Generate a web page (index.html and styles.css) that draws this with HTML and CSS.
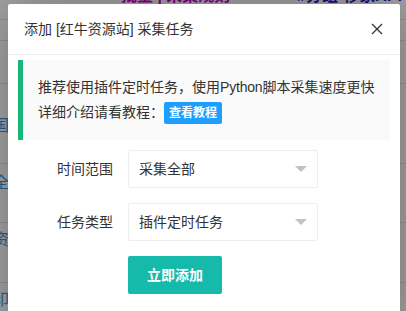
FILE: index.html
```html
<!DOCTYPE html>
<html lang="zh-CN">
<head>
<meta charset="utf-8">
<title>添加采集任务</title>
<link rel="stylesheet" href="styles.css">
</head>
<body>
<div class="page">
  <div class="row row-head">
    <span class="cell-first"></span>
    <span class="head-links">批量 | 采集规则</span>
    <span class="head-right">#分组·移家API</span>
  </div>
  <div class="row row-a"><span class="cell-first"></span></div>
  <div class="row row-b"><span class="cell-first"></span></div>
  <div class="row row-c"><span class="cell-first link">国</span></div>
  <div class="row row-d"><span class="cell-first link">全</span></div>
  <div class="row row-e"><span class="cell-first link">资</span></div>
  <div class="row row-f"><span class="cell-first link">印</span></div>
</div>

<div class="layer">
  <div class="layer-title">添加 [红牛资源站] 采集任务</div>
  <span class="layer-close" aria-label="关闭">
    <svg width="16" height="16" viewBox="0 0 16 16"><path d="M3 3 L13 13 M13 3 L3 13" stroke="#2f2f2f" stroke-width="1.2" fill="none"/></svg>
  </span>
  <div class="layer-content">
    <blockquote class="quote">
      <span class="quote-line">推荐使用插件定时任务，使用<span class="latin">Python</span>脚本采集速度更快</span>
      <span class="quote-line">详细介绍请看教程：<a class="btn-xs">查看教程</a></span>
    </blockquote>
    <form class="form">
      <div class="form-item">
        <label class="form-label">时间范围</label>
        <div class="input-inline">
          <div class="select">
            <span class="select-text">采集全部</span>
            <i class="edge"></i>
          </div>
        </div>
      </div>
      <div class="form-item">
        <label class="form-label">任务类型</label>
        <div class="input-inline">
          <div class="select">
            <span class="select-text">插件定时任务</span>
            <i class="edge"></i>
          </div>
        </div>
      </div>
      <div class="form-item">
        <div class="input-block">
          <button type="button" class="btn">立即添加</button>
        </div>
      </div>
    </form>
  </div>
</div>
</body>
</html>
```
FILE: styles.css
```css
* { box-sizing: border-box; }
html, body {
  margin: 0;
  padding: 0;
  width: 406px;
  height: 311px;
  overflow: hidden;
}
body {
  background: #a3a3a3;
  font-family: "Liberation Sans", "Noto Sans CJK SC", sans-serif;
  font-size: 14px;
  color: #333;
  position: relative;
}

/* dimmed page behind the dialog */
.page {
  display: flex;
  flex-direction: column;
}
.row {
  border-bottom: 1px solid #929292;
  display: flex;
  align-items: flex-start;
  position: relative;
}
.row-head { height: 20px; }
.row-a { height: 21px; }
.row-b { height: 43px; }
.row-c { height: 80px; padding-top: 33px; }
.row-d { height: 59px; padding-top: 10px; }
.row-e { height: 60px; padding-top: 8px; }
.row-f { height: 40px; padding-top: 8px; }
.cell-first {
  margin-left: -7px;
  width: 20px;
  font-size: 16px;
  line-height: 18px;
}
.link { color: #1f5f95; }
.head-links {
  margin-left: 108px;
  margin-top: -12px;
  color: #86008a;
  font-size: 16px;
  font-weight: bold;
  line-height: 16px;
}
.head-right {
  margin-left: auto;
  margin-right: 4px;
  margin-top: -12px;
  color: #12128a;
  font-size: 16px;
  font-weight: bold;
  line-height: 16px;
}

/* dialog */
.layer {
  position: absolute;
  left: 8px;
  top: 4px;
  width: 392px;
  height: 330px;
  background: #fff;
  border-radius: 2px;
  box-shadow: 1px 1px 50px rgba(0, 0, 0, .3);
}
.layer-title {
  height: 51px;
  line-height: 50px;
  padding: 0 81px 0 16px;
  border-bottom: 1px solid #f0f0f0;
  font-size: 14px;
  color: #333;
  white-space: nowrap;
}
.layer-close {
  position: absolute;
  right: 15px;
  top: 17px;
  width: 16px;
  height: 16px;
  display: block;
}
.layer-close svg { display: block; }
.layer-content {
  padding: 5px 10px 10px;
}
.quote {
  margin: 0 0 10px;
  padding: 15px;
  line-height: 1.8;
  border-left: 5px solid #16b777;
  border-radius: 0 2px 2px 0;
  background: #fafafa;
  color: #333;
}
.quote-line {
  display: block;
  white-space: nowrap;
}
.latin { letter-spacing: -0.2px; }
.btn-xs {
  display: inline-block;
  height: 22px;
  line-height: 22px;
  padding: 0 5px;
  font-size: 12px;
  background: #1e9fff;
  color: #fff;
  border-radius: 2px;
  vertical-align: middle;
  font-weight: bold;
}

.form { margin: 0; }
.form-item {
  display: flex;
  margin-bottom: 15px;
}
.form-label {
  width: 110px;
  padding: 9px 15px;
  line-height: 20px;
  text-align: right;
  color: #333;
}
.input-inline { width: 190px; }
.select {
  position: relative;
  height: 38px;
  line-height: 36px;
  border: 1px solid #eee;
  border-radius: 2px;
  padding-left: 10px;
  color: #333;
  background: #fff;
}
.edge {
  position: absolute;
  right: 10px;
  top: 50%;
  margin-top: -3px;
  width: 0;
  height: 0;
  border-style: solid;
  border-width: 6px 6px 0 6px;
  border-color: #c2c2c2 transparent transparent transparent;
}
.input-block { margin-left: 110px; }
.btn {
  height: 38px;
  line-height: 38px;
  padding: 0 19px;
  border: 0;
  border-radius: 2px;
  background: #16baaa;
  color: #fff;
  font-family: inherit;
  font-size: 14px;
  font-weight: bold;
}
```
